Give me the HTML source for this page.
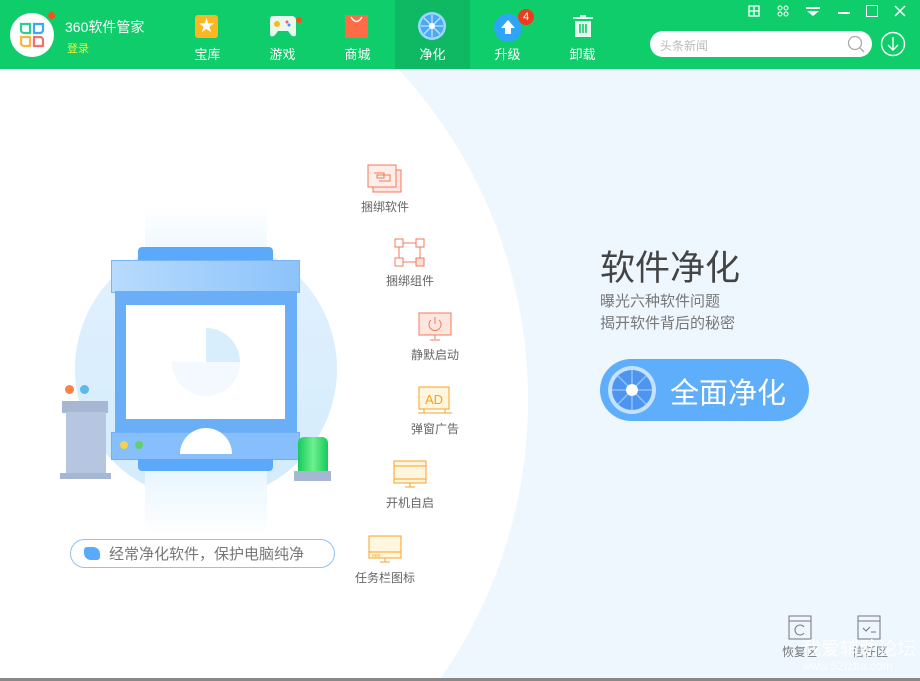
<!DOCTYPE html>
<html style="width:920px;height:681px;overflow:hidden"><head><meta charset="utf-8"><style>
*{margin:0;padding:0;box-sizing:border-box}
body{width:920px;height:681px;overflow:hidden;position:relative;background:#eef6fe;font-family:"Liberation Sans","Noto Sans CJK SC",sans-serif}
.top{position:absolute;left:0;top:0;width:920px;height:69px;background:#10cd6b}
.abs{position:absolute}
.nav{position:absolute;top:0;width:75px;height:69px;text-align:center;color:#fff;font-size:13px}
.nav span{position:absolute;left:0;right:0;top:44px}
.wc{color:#fff;font-size:14px}
.lbl{position:absolute;font-size:12px;color:#666;text-align:center;width:80px}
</style></head><body>
<div class="top"></div>
<div class="abs" style="left:10px;top:13px;width:44px;height:44px;border-radius:50%;background:#fff"></div>
<svg class="abs" style="left:19px;top:22px" width="26" height="26" viewBox="0 0 26 26"><path d="M2 2h9v9H5a3 3 0 0 1-3-3z" fill="none" stroke="#2ecf8e" stroke-width="2.2"/><path d="M15 2h9v6a3 3 0 0 1-3 3h-6z" fill="none" stroke="#3aa9f4" stroke-width="2.2"/><path d="M2 15h9v9H5a3 3 0 0 1-3-3z" fill="none" stroke="#fbb241" stroke-width="2.2"/><path d="M15 15h6a3 3 0 0 1 3 3v6h-9z" fill="none" stroke="#f86d6d" stroke-width="2.2"/></svg>
<div class="abs" style="left:48px;top:12px;width:7px;height:7px;border-radius:50%;background:#f5511e"></div>
<div class="abs wc" style="left:65px;top:17px;font-size:14px">360软件管家</div>
<div class="abs" style="left:67px;top:40px;font-size:11px;color:#e8f53a">登录</div>
<div class="nav" style="left:170px"><div class="abs" style="left:25px;top:15px;width:23px;height:23px;border-radius:3px;background:#fbb722;color:#fff;font-size:16px;line-height:23px">★</div><span>宝库</span></div>
<div class="nav" style="left:245px"><svg class="abs" style="left:22px;top:14px" width="32" height="24"><path d="M5 2h20a4 4 0 0 1 4 4v14c0 3-3 3-5 1l-3-4H11l-3 4c-2 2-5 2-5-1V6a4 4 0 0 1 2-4z" fill="#e9f8ef"/><circle cx="10" cy="10" r="3" fill="#fbb722"/><circle cx="20" cy="8" r="1.5" fill="#f56"/><circle cx="22" cy="11" r="1.5" fill="#39f"/></svg><div class="abs" style="left:51px;top:17px;width:6px;height:6px;border-radius:50%;background:#f5511e"></div><span>游戏</span></div>
<div class="nav" style="left:320px"><svg class="abs" style="left:25px;top:14px" width="23" height="24"><rect y="1" width="23" height="23" fill="#fd6b47"/><path d="M6 3q5.5 9 11 0" stroke="#fff" stroke-width="1.5" fill="none"/></svg><span>商城</span></div>
<div class="nav" style="left:395px;background:#0fb964"><svg class="abs" style="left:22px;top:11px" width="30" height="30"><circle cx="15" cy="15" r="14" fill="#9fd7ff"/><circle cx="15" cy="15" r="11.5" fill="#4aa8f5"/><g stroke="#bfe3ff" stroke-width="1.3"><path d="M15 4v22M4 15h22M7 7l16 16M23 7L7 23"/></g><circle cx="15" cy="15" r="3" fill="#fff"/></svg><span>净化</span></div>
<div class="nav" style="left:470px"><svg class="abs" style="left:23px;top:12px" width="30" height="30"><circle cx="15" cy="16" r="14" fill="#2ea6f6"/><path d="M15 8l-7 8h4v6h6v-6h4z" fill="#fff"/></svg><div class="abs" style="left:48px;top:9px;width:16px;height:16px;border-radius:50%;background:#ea3b1c;color:#fff;font-size:11px;line-height:16px">4</div><span>升级</span></div>
<div class="nav" style="left:545px"><svg class="abs" style="left:26px;top:14px" width="24" height="24"><rect x="2" y="3" width="20" height="2" fill="#e9f8ef"/><rect x="9" y="1" width="6" height="2" fill="#e9f8ef"/><rect x="4" y="7" width="16" height="16" fill="#e9f8ef"/><path d="M9 10v9M12 10v9M15 10v9" stroke="#10cd6b" stroke-width="1.6"/></svg><span>卸载</span></div>
<svg class="abs" style="left:748px;top:5px" width="12" height="12"><rect x="1" y="1" width="10" height="10" fill="none" stroke="#fff" stroke-width="1.3"/><path d="M1 6h10M6 1v10" stroke="#fff" stroke-width="1.3"/></svg>
<svg class="abs" style="left:777px;top:5px" width="12" height="12"><circle cx="3" cy="3" r="2" fill="none" stroke="#fff"/><circle cx="9" cy="3" r="2" fill="none" stroke="#fff"/><circle cx="3" cy="9" r="2" fill="none" stroke="#fff"/><circle cx="9" cy="9" r="2" fill="none" stroke="#fff"/></svg>
<svg class="abs" style="left:806px;top:7px" width="14" height="10"><rect width="14" height="2" fill="#fff"/><path d="M1 4h12l-6 5z" fill="#fff"/></svg>
<div class="abs" style="left:838px;top:12px;width:12px;height:1.5px;background:#fff"></div>
<div class="abs" style="left:866px;top:5px;width:12px;height:12px;border:1.5px solid #fff"></div>
<svg class="abs" style="left:894px;top:5px" width="12" height="12"><path d="M1 1l10 10M11 1L1 11" stroke="#fff" stroke-width="1.5"/></svg>
<div class="abs" style="left:650px;top:31px;width:222px;height:26px;border-radius:13px;background:#fff;font-size:12px;color:#bbb;padding:6px 10px">头条新闻</div>
<svg class="abs" style="left:846px;top:34px" width="20" height="20"><circle cx="9" cy="9" r="6.5" stroke="#aaa" stroke-width="1.3" fill="none"/><path d="M14 14l4 4" stroke="#aaa" stroke-width="1.3"/></svg>
<svg class="abs" style="left:880px;top:31px" width="26" height="26"><circle cx="13" cy="13" r="11.5" stroke="#fff" stroke-width="1.4" fill="none"/><path d="M13 6v13M8 14l5 5 5-5" stroke="#fff" stroke-width="1.4" fill="none"/></svg>
<div class="abs" style="top:69px;left:0;width:920px;height:609px;overflow:hidden">
<div class="abs" style="left:-446px;top:-156px;width:974px;height:974px;border-radius:50%;background:radial-gradient(circle,#fff 98.5%,#e4f0fc 99.2%,#eef6fe 100%)"></div>
</div>
<div class="abs" style="left:75px;top:238px;width:262px;height:262px;border-radius:50%;background:linear-gradient(#e2f0ff,#d3ecfb)"></div>
<div class="abs" style="left:145px;top:205px;width:122px;height:330px;background:linear-gradient(#fff,#dbf1fd 30%,#dbf1fd 70%,#fff)"></div>
<div class="abs" style="left:138px;top:247px;width:135px;height:14px;border-radius:4px 4px 0 0;background:#5aa9fa"></div>
<div class="abs" style="left:111px;top:260px;width:189px;height:33px;background:linear-gradient(90deg,#b8dbfd,#8cc3fb);border:1px solid #79b4f6"></div>
<div class="abs" style="left:115px;top:291px;width:182px;height:144px;background:#6aaef8"></div>
<div class="abs" style="left:126px;top:305px;width:159px;height:114px;background:#fff"></div>
<div class="abs" style="left:172px;top:328px;width:68px;height:68px;border-radius:50%;background:conic-gradient(#d8eefc 0 90deg,#f3f9fe 90deg 270deg,#fff 270deg)"></div>
<div class="abs" style="left:111px;top:432px;width:189px;height:28px;background:#86bffb;border:1px solid #6fb0f6"></div>
<div class="abs" style="left:138px;top:459px;width:135px;height:12px;background:#5aa9fa;border-radius:0 0 4px 4px"></div>
<div class="abs" style="left:180px;top:428px;width:52px;height:26px;border-radius:26px 26px 0 0;background:#fff"></div>
<div class="abs" style="left:120px;top:441px;width:8px;height:8px;border-radius:50%;background:#f3d24e"></div>
<div class="abs" style="left:135px;top:441px;width:8px;height:8px;border-radius:50%;background:#5fd06b"></div>
<div class="abs" style="left:62px;top:401px;width:46px;height:12px;background:#a6b6d3"></div>
<div class="abs" style="left:66px;top:412px;width:40px;height:62px;background:#b6c6e0"></div>
<div class="abs" style="left:60px;top:473px;width:51px;height:6px;background:#a6b6d3"></div>
<div class="abs" style="left:65px;top:385px;width:9px;height:9px;border-radius:50%;background:#f7834a"></div>
<div class="abs" style="left:80px;top:385px;width:9px;height:9px;border-radius:50%;background:#5bb8ea"></div>
<div class="abs" style="left:298px;top:437px;width:30px;height:36px;border-radius:6px 6px 0 0;background:linear-gradient(90deg,#16c95c,#6ef08e,#16c95c)"></div>
<div class="abs" style="left:294px;top:471px;width:37px;height:10px;background:#a6b6d3"></div>
<div class="abs" style="left:70px;top:539px;width:265px;height:29px;border-radius:15px;border:1.5px solid #8fc3f7;background:#fff;font-size:15px;color:#777;padding:3px 0 0 38px">经常净化软件，保护电脑纯净</div>
<div class="abs" style="left:84px;top:547px;width:16px;height:13px;border-radius:3px 7px 3px 7px;background:#5aa9fa"></div>
<svg class="abs" style="left:367px;top:164px" width="36" height="30"><rect x="6" y="6" width="28" height="22" fill="#fde6df" stroke="#f47a5b"/><rect x="1" y="1" width="28" height="22" fill="#fdeee9" stroke="#f47a5b"/><path d="M7 9h10v5H10v-3h13v6H12" fill="none" stroke="#f47a5b"/></svg>
<div class="lbl" style="left:345px;top:198px">捆绑软件</div>
<svg class="abs" style="left:394px;top:238px" width="32" height="30"><g fill="#fff" stroke="#f47a5b"><rect x="1" y="1" width="8" height="8"/><rect x="22" y="1" width="8" height="8"/><rect x="1" y="20" width="8" height="8"/><rect x="22" y="20" width="8" height="8" fill="#fde0d8"/></g><path d="M9 5h13M5 9v11M26 9v11M9 24h13" stroke="#f47a5b"/></svg>
<div class="lbl" style="left:370px;top:272px">捆绑组件</div>
<svg class="abs" style="left:418px;top:312px" width="34" height="30"><rect x="1" y="1" width="32" height="22" fill="#fde6df" stroke="#f47a5b"/><path d="M13 8a6 6 0 1 0 8 0M17 5v7" stroke="#f47a5b" fill="none"/><path d="M17 23v4M12 28h10" stroke="#f47a5b"/></svg>
<div class="lbl" style="left:395px;top:346px">静默启动</div>
<svg class="abs" style="left:418px;top:386px" width="34" height="30"><rect x="1" y="1" width="30" height="22" fill="#fff6df" stroke="#f8a021"/><text x="16" y="18" text-anchor="middle" font-size="13" fill="#f8a021" font-family="Liberation Sans">AD</text><path d="M0 27h34M6 23v4M27 23v4" stroke="#f8a021"/></svg>
<div class="lbl" style="left:395px;top:420px">弹窗广告</div>
<svg class="abs" style="left:393px;top:460px" width="34" height="30"><rect x="1" y="1" width="32" height="22" fill="#fff6df" stroke="#f8a021"/><path d="M1 6h32M1 19h32M17 23v4M12 27h10" stroke="#f8a021"/></svg>
<div class="lbl" style="left:370px;top:494px">开机自启</div>
<svg class="abs" style="left:368px;top:535px" width="34" height="30"><rect x="1" y="1" width="32" height="22" fill="#fff6df" stroke="#f8a021"/><path d="M1 17h32M17 23v4M12 27h10" stroke="#f8a021"/><text x="4" y="22" font-size="5" fill="#f8a021">ooo</text></svg>
<div class="lbl" style="left:345px;top:569px">任务栏图标</div>
<div class="abs" style="left:600px;top:240px;font-size:35px;color:#444">软件净化</div>
<div class="abs" style="left:600px;top:291px;font-size:15px;color:#777;line-height:22px">曝光六种软件问题<br>揭开软件背后的秘密</div>
<div class="abs" style="left:600px;top:359px;width:209px;height:62px;border-radius:31px;background:#5faefb"></div>
<svg class="abs" style="left:606px;top:364px" width="52" height="52"><circle cx="26" cy="26" r="24" fill="#c4e2ff"/><circle cx="26" cy="26" r="20" fill="#4d95ee"/><g stroke="#8fc0f8" stroke-width="1.5"><path d="M26 6v40M6 26h40M12 12l28 28M40 12L12 40"/></g><circle cx="26" cy="26" r="6" fill="#fff"/></svg>
<div class="abs" style="left:670px;top:370px;font-size:29px;color:#fff">全面净化</div>
<svg class="abs" style="left:788px;top:615px" width="24" height="26"><rect x="1" y="1" width="22" height="23" fill="none" stroke="#777"/><path d="M1 6h22" stroke="#777"/><path d="M16 12a5 5 0 1 0 0 6" fill="none" stroke="#777"/></svg>
<svg class="abs" style="left:857px;top:615px" width="24" height="26"><rect x="1" y="1" width="22" height="23" fill="none" stroke="#777"/><path d="M1 6h22M6 13l3 3 4-4M14 17h5" fill="none" stroke="#777"/></svg>
<div class="abs" style="left:782px;top:643px;font-size:12px;color:#777">恢复区</div>
<div class="abs" style="left:852px;top:643px;font-size:12px;color:#777">信任区</div>
<div class="abs" style="left:802px;top:634px;font-size:19px;color:rgba(255,255,255,.85);white-space:nowrap">我爱辅助论坛</div>
<div class="abs" style="left:802px;top:659px;font-size:12px;color:rgba(255,255,255,.85);white-space:nowrap">www.52fzba.com</div>
<div class="abs" style="left:0;top:678px;width:920px;height:3px;background:#888"></div>
</body></html>
